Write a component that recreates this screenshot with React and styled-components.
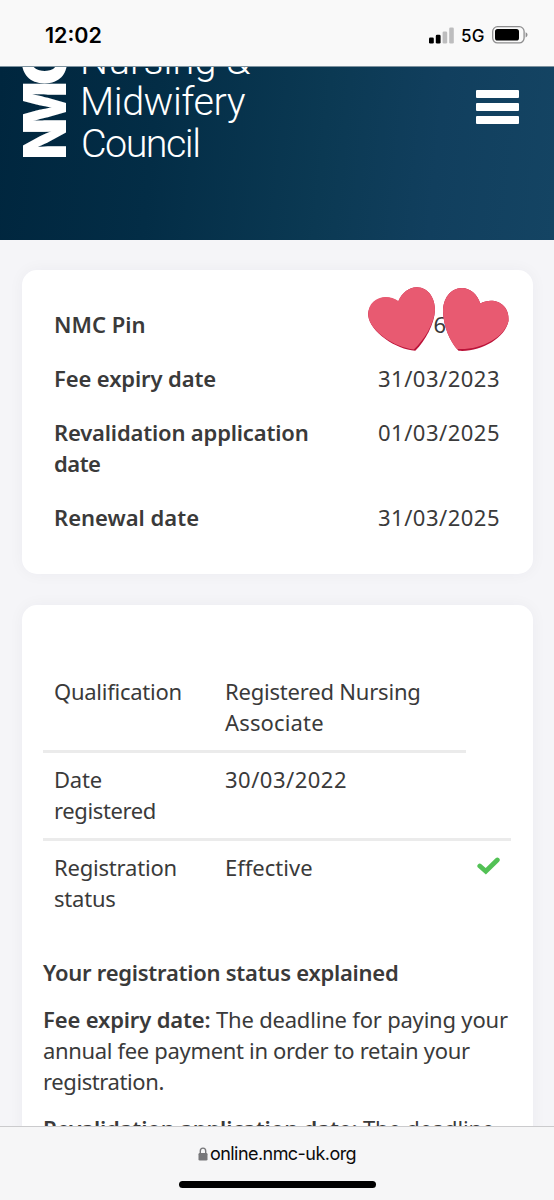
import React from 'react';
import styled, { createGlobalStyle } from 'styled-components';

const GlobalStyle = createGlobalStyle`
  * { box-sizing: border-box; }
  body { margin: 0; background: #f5f5f8; }
`;

const Screen = styled.div`
  display: flex;
  flex-direction: column;
  width: 554px;
  height: 1200px;
  overflow: hidden;
  background: #f5f5f8;
  color: #3a3a3a;
  font-family: 'Noto Sans', sans-serif;
  font-size: 22px;
  line-height: 31.3px;
`;

const StatusBar = styled.div`
  display: flex;
  flex: 0 0 66px;
  align-items: flex-start;
  justify-content: space-between;
  padding: 22px 25px 0 45px;
  background: #f9f9f9;
  color: #000;
  font-family: Inter, sans-serif;
`;

const Clock = styled.div`
  font-size: 21.5px;
  font-weight: 600;
  line-height: 27px;
`;

const StatusIcons = styled.div`
  display: flex;
  align-items: center;
  height: 26px;
`;

const Network = styled.span`
  width: 38px;
  padding: 2px 0 0 7px;
  font-size: 17px;
  font-weight: 500;
  line-height: 24px;
  letter-spacing: 0.2px;
  white-space: nowrap;
`;

const Header = styled.header`
  display: flex;
  flex: 0 0 174px;
  align-items: flex-start;
  justify-content: space-between;
  padding: 0 35px 0 22px;
  overflow: hidden;
  border-top: 1px solid #7d929f;
  background: linear-gradient(96deg, #00263e 0%, #032d46 28%, #0b3953 58%, #113f5e 78%, #144463 100%);
`;

const MenuButton = styled.button`
  display: flex;
  flex-direction: column;
  gap: 5.5px;
  width: 43px;
  margin: 23px 0 0;
  padding: 0;
  border: 0;
  background: none;
`;

const MenuBar = styled.span`
  height: 7.5px;
  border-radius: 1px;
  background: #fff;
`;

const Content = styled.main`
  display: flex;
  flex: 1;
  flex-direction: column;
  gap: 31px;
  min-height: 0;
  padding: 30px 21px 0 22px;
  overflow: hidden;
`;

const Card = styled.section`
  flex: none;
  border-radius: 15px;
  background: #fff;
  box-shadow: 0 0 16px rgba(40, 40, 80, 0.045);
`;

const SummaryCard = styled(Card)`
  display: flex;
  flex-direction: column;
  gap: 22.7px;
  height: 304px;
  padding: 39px 33px 0 32px;
`;

const SummaryRow = styled.div`
  position: relative;
  display: flex;
  justify-content: space-between;
`;

const Line = styled.span`
  display: block;
  white-space: nowrap;
  letter-spacing: ${(p) => p.$track || 0}px;
`;

const Label = styled.div`
  font-weight: 600;
`;

const Value = styled.div`
  width: 122px;
`;

const Pin = styled.div`
  width: 80px;
`;

const Hearts = styled.svg`
  position: absolute;
  top: -24px;
  right: -10px;
`;

const DetailCard = styled(Card)`
  height: 620px;
  padding: 60px 22px 0 21px;
`;

const DetailRow = styled.div`
  display: grid;
  grid-template-columns: 171px 1fr auto;
  width: ${(p) => p.$width || 468}px;
  height: 88px;
  padding: 11px 11px 0;
  border-bottom: ${(p) => (p.$last ? 0 : 3)}px solid #ebebeb;
`;

const Check = styled.svg`
  margin-top: 5px;
`;

const Heading = styled.h2`
  margin: 28px 0 15.5px;
  font-size: 22px;
  font-weight: 600;
  line-height: 31.3px;
`;

const Paragraph = styled.p`
  margin: 0 0 15.5px;
`;

const Strong = styled.b`
  font-weight: 600;
  letter-spacing: ${(p) => p.$track}px;
`;

const BrowserBar = styled.footer`
  display: flex;
  flex: 0 0 74px;
  flex-direction: column;
  align-items: center;
  border-top: 1px solid #cbcbcd;
  background: #f6f6f7;
`;

const Address = styled.div`
  display: flex;
  align-items: center;
  gap: 2px;
  height: 25px;
  margin: 14px 0 15px;
  color: #0b0b0b;
  font-family: Inter, sans-serif;
  font-size: 18px;
  line-height: 25px;
  letter-spacing: -0.55px;
`;

const HomeIndicator = styled.div`
  width: 197px;
  height: 7px;
  border-radius: 4px;
  background: #000;
`;

function Signal() {
  return (
    <svg width="25" height="17" viewBox="0 0 25 17">
      <rect x="0" y="10.5" width="4.8" height="6" rx="1.3" />
      <rect x="6.8" y="7.8" width="4.8" height="8.7" rx="1.3" />
      <rect x="13.6" y="4.5" width="4.6" height="12" rx="1.3" fill="#bdbdbe" />
      <rect x="20.2" y="0.5" width="4.6" height="16" rx="1.3" fill="#bdbdbe" />
    </svg>
  );
}

function Battery() {
  return (
    <svg width="37" height="18" viewBox="0 0 37 18">
      <rect x="0.7" y="0.7" width="31.4" height="16.2" rx="4.8" fill="none" stroke="#8d8d8e" strokeWidth="1.3" />
      <rect x="3" y="3" width="24" height="11.6" rx="2.6" />
      <path d="M33.6 6.2c1.2.4 1.9 1.4 1.9 2.6s-.7 2.2-1.9 2.6z" fill="#8d8d8e" />
    </svg>
  );
}

function Logo() {
  return (
    <svg width="240" height="110" viewBox="22 67 240 110" fill="#fff">
      <g transform="translate(65.7 157) rotate(-90)" fontFamily="Inter" fontSize="58.5" fontWeight="900">
        <text x="-2.5" textLength="41" lengthAdjust="spacingAndGlyphs">N</text>
        <text x="23" textLength="53" lengthAdjust="spacingAndGlyphs">M</text>
        <text x="71.500" textLength="46" lengthAdjust="spacingAndGlyphs">C</text>
      </g>
      <g fontFamily="Roboto" fontSize="39.5" fontWeight="300">
        <text x="80" y="73.7" textLength="170.5" lengthAdjust="spacing">Nursing &amp;</text>
        <text x="80" y="115.3" textLength="165.5" lengthAdjust="spacing">Midwifery</text>
        <text x="81" y="157" textLength="120" lengthAdjust="spacing">Council</text>
      </g>
    </svg>
  );
}

function PinHearts() {
  return (
    <Hearts width="144" height="68" viewBox="366 285 144 68">
      <path fill="#bb1238" d="M398.3 301.5C402 292.5 409.500 287 417 287.200C428.500 287.500 435 298 435 310C434.500 324 425.500 340.500 415.300 350.800C396 349.500 370 332 368.200 315.500C367.500 302 384.500 291.500 398.300 301.500Z" />
      <path fill="#e85a71" d="M398.300 300.900C402 292.500 409.500 287 417 287.200C428.500 287.500 435 298 435 310C434 324.500 424 340 413.800 349.500C395 347.500 370 331.500 368.200 315.500C367.500 298 386 292.500 398.300 300.900Z" />
      <path fill="#bb1238" d="M480.300 303.500C477.500 294 470 288 462 287.900C450 288 443 299 443 311.500C443.500 326 449.500 341 458.500 350.800C480 352.500 505 338.500 508.500 321C510 303 493 296.500 480.300 303.500Z" />
      <path fill="#e85a71" d="M480.300 303.500C477.500 294 470 288 462 287.900C450 288 443 299 443 311.500C443.500 325.500 449 340 457 349C480 350.500 504.500 338 508.500 321C510 303 493 296.500 480.300 303.500Z" />
    </Hearts>
  );
}

export default function App() {
  return (
    <Screen>
      <GlobalStyle />
      <StatusBar>
        <Clock>12:02</Clock>
        <StatusIcons>
          <Signal />
          <Network>5G</Network>
          <Battery />
        </StatusIcons>
      </StatusBar>
      <Header>
        <Logo />
        <MenuButton aria-label="Menu">
          <MenuBar />
          <MenuBar />
          <MenuBar />
        </MenuButton>
      </Header>
      <Content>
        <SummaryCard>
          <SummaryRow>
            <Label><Line>NMC Pin</Line></Label>
            <Pin><Line $track={0.8}>16</Line></Pin>
            <PinHearts />
          </SummaryRow>
          <SummaryRow>
            <Label><Line $track={-0.12}>Fee expiry date</Line></Label>
            <Value><Line $track={0.5}>31/03/2023</Line></Value>
          </SummaryRow>
          <SummaryRow>
            <Label>
              <Line $track={-0.17}>Revalidation application</Line>
              <Line $track={-0.5}>date</Line>
            </Label>
            <Value><Line $track={0.5}>01/03/2025</Line></Value>
          </SummaryRow>
          <SummaryRow>
            <Label><Line>Renewal date</Line></Label>
            <Value><Line $track={0.5}>31/03/2025</Line></Value>
          </SummaryRow>
        </SummaryCard>
        <DetailCard>
          <DetailRow $width={423}>
            <Line $track={-0.25}>Qualification</Line>
            <div>
              <Line $track={-0.2}>Registered Nursing</Line>
              <Line $track={0.15}>Associate</Line>
            </div>
          </DetailRow>
          <DetailRow>
            <div>
              <Line $track={-0.2}>Date</Line>
              <Line $track={-0.38}>registered</Line>
            </div>
            <Line $track={0.5}>30/03/2022</Line>
          </DetailRow>
          <DetailRow $last>
            <div>
              <Line $track={-0.2}>Registration</Line>
              <Line $track={-0.2}>status</Line>
            </div>
            <Line>Effective</Line>
            <Check width="23" height="18" viewBox="0 0 23 18" fill="none" stroke="#52c155" strokeWidth="4.8" strokeLinecap="round">
              <path d="M2.800 9L8.800 14.200L20.300 3" />
            </Check>
          </DetailRow>
          <Heading><Line $track={-0.25}>Your registration status explained</Line></Heading>
          <Paragraph>
            <Line $track={-0.2}><Strong $track={-0.15}>Fee expiry date:</Strong> The deadline for paying your</Line>
            <Line $track={-0.33}>annual fee payment in order to retain your</Line>
            <Line $track={-0.4}>registration.</Line>
          </Paragraph>
          <Paragraph>
            <Line $track={-0.15}><Strong $track={-0.15}>Revalidation application date:</Strong> The deadline</Line>
          </Paragraph>
        </DetailCard>
      </Content>
      <BrowserBar>
        <Address>
          <svg width="10" height="14" viewBox="0 0 10 14">
            <path d="M2.300 7V4a2.700 2.900 0 0 1 5.400 0V7" fill="none" stroke="#77777a" strokeWidth="1.400" />
            <rect x="0.500" y="6" width="9" height="7.500" rx="1.300" fill="#77777a" />
          </svg>
          <span>online.nmc-uk.org</span>
        </Address>
        <HomeIndicator />
      </BrowserBar>
    </Screen>
  );
}
